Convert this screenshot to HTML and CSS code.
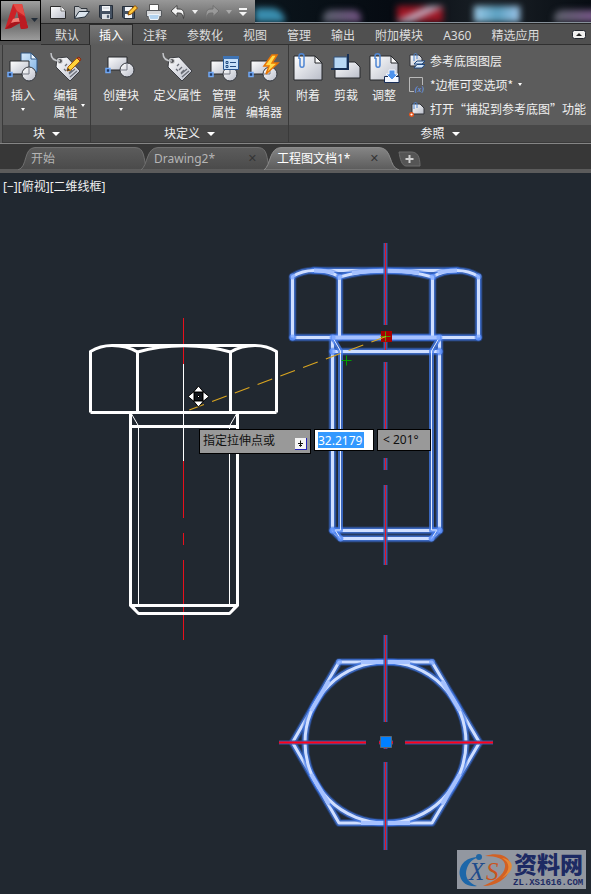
FILE: index.html
```html
<!DOCTYPE html>
<html lang="zh-CN">
<head>
<meta charset="utf-8">
<meta name="viewport" content="width=device-width, initial-scale=1">
<title>工程图文档1</title>
<link rel="stylesheet" href="styles.css">
</head>
<body>
<svg class="defs" aria-hidden="true">
  <defs>
    <linearGradient id="paper" x1="0" y1="0" x2="1" y2="1"><stop offset="0" stop-color="#ffffff"/><stop offset="1" stop-color="#b9bdc9"/></linearGradient>
    <linearGradient id="sky" x1="0" y1="0" x2="1" y2="1"><stop offset="0" stop-color="#d8ebfc"/><stop offset="1" stop-color="#82b4e6"/></linearGradient>
    <linearGradient id="tabFill" x1="0" y1="0" x2="0" y2="1"><stop offset="0" stop-color="#5c5c5c"/><stop offset="1" stop-color="#4a4a4a"/></linearGradient>
    <linearGradient id="tabActive" x1="0" y1="0" x2="0" y2="1"><stop offset="0" stop-color="#858585"/><stop offset="1" stop-color="#5b5b5b"/></linearGradient>
    <g id="block"><path d="M3 9H22V22H3Z" fill="url(#paper)" stroke="#26282c"/><path d="M1 20.500H5V24.500H1Z" fill="#203a66" stroke="#70a8f5" stroke-width="1.500"/><circle cx="22" cy="22" r="7" fill="url(#paper)" stroke="#33363c"/><path d="M22 15V22H15" fill="none" stroke="#777b85"/></g>
    <g id="tag"><path d="M7 6 17 5 30 19 20 29 6 15Z" fill="url(#paper)" stroke="#3b3d42"/><circle cx="10" cy="9" r="2.500" fill="#56585c" stroke="#d7d7d7"/><path d="M1 1C1 7 4 9 10 9" fill="none" stroke="#c3c5c9" stroke-width="1.500"/><path d="M17 12 15 14M20 15 17 18M22 18 19 21M14 17 16 19M19 22 25 17M20 25 27 19" stroke="#6b6f78" stroke-width="1.300"/></g>
    <g id="pencil"><path d="M17 19 18 15 27 6 30 9 21 18Z" fill="#ffd43a" stroke="#ad5b00"/><path d="M27 6 30 9 31 7 29 5Z" fill="#c85932" stroke="#833014"/><path d="M17 19 18 16 20 18Z" fill="#333"/></g>
    <g id="sheet"><path d="M2 4H23L30 11V28H2Z" fill="url(#paper)" stroke="#25272b"/><path d="M23 4V11H30Z" fill="#f7f7f7" stroke="#25272b"/></g>
    <path id="clip" d="M6 6V3C6 0 11 0 11 3V12C11 15 7 15 7 12V5" fill="none" stroke="#4f86d3" stroke-width="1.500"/>
    <path id="head-side" d="M90.500 412.500V351.500C97 347.500 104 345.500 112 345.500C122 345.500 130 347.500 137.500 352M276.500 412.500V351.500C270 347.500 263 345.500 255 345.500C246 345.500 238 347.500 230.500 352"/>
    <path id="head-mid" d="M137.500 412.500V352C166 343.500 202 343.500 230.500 352V412.500"/>
    <path id="head-top" d="M112 345.500H255"/>
    <path id="head-base" d="M90.500 412.500H276.500"/>
    <path id="shank" d="M130.500 412.500V605.500L138.500 613.500H229.500L237.500 605.500V412.500Z"/>
    <path id="rings" d="M130.500 426.500H237.500M130.500 605.500H237.500"/>
    <path id="thread" d="M131 413 138.500 426V605L133 605L138.500 613.500M237 413 229.500 426V605L235 605L229.500 613.500"/>
    <path id="bolt-axis" d="M183.500 318V400M183.500 412V425M183.500 437V518M183.500 533V545M183.500 560V640"/>
    <path id="hexagon" d="M339 662H432L479.500 742.500 432 823H339L292.500 742.500Z"/>
    <circle id="inscribed" cx="385.500" cy="742.500" r="80.500"/>
    <path id="plan-axis-v" d="M385.500 635V722M385.500 736V749M385.500 762V850"/>
    <path id="plan-axis-h" d="M279 742.500H366M379 742.500H393M405 742.500H493"/>
  </defs>
</svg>

<header class="top">
  <button class="app" aria-label="应用程序菜单">
    <svg width="39" height="39" viewBox="0 0 39 39"><path d="M4 28 12 3H21L27 27 20 28 16 10 10 27Z" fill="#cc2227"/><path d="M12 3H21L24 15 16 10Z" fill="#e34b45"/><path d="M4 28 14 18 25 20 27 27 20 28 19 22 10 27Z" fill="#a8151c"/><path d="M12 18C17 16 23 17 26 24C21 20 16 20 10 22Z" fill="#f08078"/><path d="M20 28 17 13 24 16 27 27Z" fill="#bb1b22"/><path d="M30 17H37L33.500 21Z" fill="#222c38"/></svg>
  </button>
  <div class="titlebar">
    <div class="quick">
      <button aria-label="新建"><svg width="16" height="16"><path d="M.5 2.500H11L15.500 7V14.500H.5Z" fill="url(#paper)" stroke="#2a2a2a"/><path d="M11 2.500V7H15.500" fill="#fff" stroke="#777"/></svg></button>
      <button aria-label="打开"><svg width="16" height="16"><path d="M.5 14V2.500H5L7 4.500H13V7" fill="#bfc3c8" stroke="#30353c"/><path d="M.5 14.500 5 7.500H15.500L11 13Z" fill="#dce5ee" stroke="#26313d"/></svg></button>
      <button aria-label="保存"><svg width="16" height="16"><path d="M1.500 1.500H14.500V14.500H3L1.500 13Z" fill="#445162" stroke="#252d38"/><path d="M4 2H12V7H4Z" fill="#f2f4f7"/><path d="M4 10H12V15H4Z" fill="#dce0e5"/><path d="M9 11H11V14H9ZM5 4H11" fill="#39465a" stroke="#97a1af" stroke-width=".5"/></svg></button>
      <button aria-label="另存为"><svg width="16" height="16"><path d="M.5 2.500H12.500V14.500H2L.5 13Z" fill="#445162" stroke="#252d38"/><path d="M3 3H10V7H3ZM3 10H10V14H3Z" fill="#f2f4f7"/><path d="M6 11 7 7.500 13 1.500 15.500 4 9.500 10Z" fill="#ffc738" stroke="#8e4b00"/></svg></button>
      <button aria-label="打印"><svg width="16" height="16"><path d="M3.500 7V.5H12.500V7" fill="#fff" stroke="#555"/><path d="M.5 6.500H15.500V12.500H.5Z" fill="#d5d7da" stroke="#55585c"/><path d="M2.500 10.500H13.500L12 15.500H4Z" fill="#b3d3ef" stroke="#eef3f8"/></svg></button>
      <button aria-label="放弃"><svg width="16" height="16"><path d="M1 7 7 1.500V5H9C13 5 15 8 13.500 14.500C13 11 12 9 9 9H7V12.500Z" fill="#f3f3f3" stroke="#444"/></svg></button>
      <button class="mini" aria-label="放弃列表"><svg width="6" height="4"><path d="M0 0H6L3 4Z" fill="#eee"/></svg></button>
      <button aria-label="重做"><svg width="16" height="16"><path d="M15 7 9 1.500V5H7C3 5 1 8 2.500 14.500C3 11 4 9 7 9H9V12.500Z" fill="#999" stroke="#707070"/></svg></button>
      <button class="mini" aria-label="重做列表"><svg width="6" height="4"><path d="M0 0H6L3 4Z" fill="#aaa"/></svg></button>
      <button class="more" aria-label="自定义"><svg width="8" height="8"><path d="M0 0H8V2H0ZM0 4H8L4 8Z" fill="#f5f5f5"/></svg></button>
    </div>
    <div class="glass"><i class="teal"></i><i class="plum"></i><i class="red"></i><i class="ice"></i><i class="violet"></i></div>
  </div>
  <nav class="menu">
    <a href="#">默认</a><a href="#" class="on">插入</a><a href="#">注释</a><a href="#">参数化</a><a href="#">视图</a><a href="#">管理</a><a href="#">输出</a><a href="#">附加模块</a><a href="#">A360</a><a href="#">精选应用</a>
    <button class="fold" aria-label="最小化功能区"><svg width="14" height="9"><rect x=".5" y=".5" width="13" height="8" rx="2" fill="#f0f0f0" stroke="#242830"/><path d="M4 6H10L7 3Z" fill="#222"/></svg></button>
  </nav>
</header>

<main>
<section class="ribbon" aria-label="功能区">
  <div class="panel">
    <div class="tools">
      <button class="tool w40"><svg width="32" height="32"><path d="M14 1H24L30 7V20H14Z" fill="url(#sky)" stroke="#315781"/><path d="M24 1V7H30Z" fill="#eff7ff" stroke="#315781"/><use href="#block"/></svg><span>插入</span><b class="caret"></b></button>
      <button class="tool w45 side"><svg width="32" height="32"><use href="#tag"/><use href="#pencil"/></svg><span>编辑<br>属性</span><b class="caret"></b></button>
    </div>
    <button class="caption">块<b class="arrow"></b></button>
  </div>
  <div class="panel blocks">
    <div class="tools">
      <button class="tool w60"><svg width="32" height="32"><use href="#block" y="-4"/></svg><span>创建块</span><b class="caret"></b></button>
      <button class="tool w53"><svg width="32" height="32"><use href="#tag"/></svg><span>定义属性</span></button>
      <button class="tool w40"><svg width="32" height="32"><use href="#block"/><path d="M15.500 4.500H30.500V17.500H15.500Z" fill="#c7e0f9" stroke="#28558f"/><path d="M15 4H31V7H15Z" fill="#3f74b5"/><path d="M18 9.500H20V11.500H18ZM18 13.500H20V15.500H18ZM22 10.500H28M22 14.500H28" fill="none" stroke="#234c82"/></svg><span>管理<br>属性</span></button>
      <button class="tool w40"><svg width="32" height="32"><use href="#block"/><path d="M24 3 16 14H21L18 22 30 11H24L29 3Z" fill="#ffda4a" stroke="#e87505" stroke-width="1.500"/></svg><span>块<br>编辑器</span></button>
    </div>
    <button class="caption">块定义<b class="arrow"></b></button>
  </div>
  <div class="panel wide">
    <div class="tools">
      <button class="tool w38"><svg width="32" height="32"><use href="#sheet"/><use href="#clip" x="1" y="1"/></svg><span>附着</span></button>
      <button class="tool w38"><svg width="32" height="32"><path d="M5 10H25L30 15V26H5Z" fill="url(#paper)" stroke="#25272b"/><path d="M4 5H17V17H4Z" fill="#b8d8f5" stroke="#33527c"/><path d="M18 2V17H1" fill="none" stroke="#152e54" stroke-width="2"/></svg><span>剪裁</span></button>
      <button class="tool w38"><svg width="32" height="32"><use href="#sheet"/><use href="#clip" x="1" y="1"/><path d="M16.500 24.500H31V30.500H16.500Z" fill="#f3f7ff" stroke="#182d56"/><path d="M21 18H27V22H30L24 28 18 22H21Z" fill="#4e93ee" stroke="#f3f7ff"/></svg><span>调整</span></button>
      <div class="rows">
        <button><svg width="16" height="16"><path d="M1 2H10L13 5V13H1Z" fill="url(#paper)" stroke="#303238"/><path d="M5 8V2C5 0 8 0 8 2V6" fill="none" stroke="#4f86d3"/><path d="M8 8H16L13 11H5ZM8 11.500H16L13 15H5Z" fill="#d5e8fb" stroke="#20477d"/></svg>参考底图图层</button>
        <button><svg width="16" height="16"><path d="M5 14.500H.5V.5H13.500V8" fill="none" stroke="#b9b9b9"/><text x="6" y="15" class="fx">(x)</text></svg>*边框可变选项*<b class="caret"></b></button>
        <button><svg width="16" height="16"><path d="M3 3H11L15 7V13H3Z" fill="url(#paper)" stroke="#303238"/><path d="M5 8V3C5 1 8 1 8 3V7" fill="none" stroke="#4f86d3"/><circle cx="2.500" cy="13.500" r="1.800" fill="#fff" stroke="#e5531b" stroke-width="1.400"/></svg>打开“捕捉到参考底图”功能</button>
      </div>
    </div>
    <button class="caption">参照<b class="arrow"></b></button>
  </div>
</section>

<nav class="files">
  <a href="#" class="file"><svg viewBox="0 0 129 23" preserveAspectRatio="none"><path d="M0 23C10 20 5 1 17 .5H117C127 1 125 10 129 23Z" fill="url(#tabFill)" stroke="#707070"/></svg><span>开始</span></a>
  <a href="#" class="file"><svg viewBox="0 0 129 23" preserveAspectRatio="none"><path d="M0 23C7 18 5 1 17 .5H117C127 1 125 10 129 23Z" fill="url(#tabFill)" stroke="#707070"/></svg><span>Drawing2*</span><i>✕</i></a>
  <a href="#" class="file current"><svg viewBox="0 0 135 23" preserveAspectRatio="none"><path d="M0 23C7 18 5 1 17 .5H115C129 1 124 20 135 23Z" fill="url(#tabActive)" stroke="#8c8c8c"/></svg><span>工程图文档1*</span><i>✕</i></a>
  <button class="add" aria-label="新图形"><svg width="23" height="16"><path d="M1 1H13C19 1 22 5 22 15H8C4 15 2 8 1 1Z" fill="#555" stroke="#6c6c6c"/><path d="M11.500 4V12M7.500 8H15.500" stroke="#d0d0d0" stroke-width="2"/></svg></button>
</nav>

<section class="canvas" aria-label="绘图区">
  <svg class="drawing" width="591" height="721" viewBox="0 173 591 721">
    <g class="white">
      <use href="#bolt-axis" class="axis"/>
      <use href="#head-side"/><use href="#head-mid"/><use href="#head-top"/><use href="#head-base"/><use href="#shank"/><use href="#rings"/>
      <use href="#thread" class="thin"/>
    </g>
    <g class="picked" transform="translate(202 -75)">
      <g><use href="#shank" class="halo"/><use href="#shank" class="glow"/><use href="#shank" class="core"/></g>
      <g><use href="#rings" class="halo"/><use href="#rings" class="glow"/><use href="#rings" class="core"/></g>
      <g><use href="#head-base" class="halo"/><use href="#head-base" class="glow"/><use href="#head-base" class="core"/></g>
      <g><use href="#head-top" class="halo"/><use href="#head-top" class="glow"/><use href="#head-top" class="core"/></g>
      <g><use href="#head-side" class="halo"/><use href="#head-side" class="glow"/><use href="#head-side" class="core"/></g>
      <g><use href="#head-mid" class="halo"/><use href="#head-mid" class="glow"/><use href="#head-mid" class="core"/></g>
      <g><use href="#thread" class="halo slim"/><use href="#thread" class="glow slim"/><use href="#thread" class="core slim"/></g>
      <path class="overlap" d="M130 412.500H238M112 345.500C122 345.500 127 346 132 348M255 345.500C246 345.500 241 346 236 348M150 348C170 345 197 345 217 348"/>
      <g class="nodes"><circle cx="90.500" cy="351.500" r="3"/><circle cx="276.500" cy="351.500" r="3"/><circle cx="137.500" cy="352" r="3"/><circle cx="230.500" cy="352" r="3"/><circle cx="90.500" cy="412.500" r="3"/><circle cx="276.500" cy="412.500" r="3"/><circle cx="130.500" cy="412.500" r="3"/><circle cx="237.500" cy="412.500" r="3"/><circle cx="130.500" cy="426.500" r="3"/><circle cx="237.500" cy="426.500" r="3"/><circle cx="130.500" cy="605.500" r="3"/><circle cx="237.500" cy="605.500" r="3"/><circle cx="138.500" cy="613.500" r="3"/><circle cx="229.500" cy="613.500" r="3"/></g>
      <use href="#bolt-axis" class="axishalo"/><use href="#bolt-axis" class="axisglow"/><use href="#bolt-axis" class="axis"/>
    </g>
    <g class="picked">
      <g><use href="#hexagon" class="halo"/><use href="#hexagon" class="glow"/><use href="#hexagon" class="core"/></g>
      <g><use href="#inscribed" class="halo"/><use href="#inscribed" class="glow"/><use href="#inscribed" class="core"/></g>
      <path class="overlap" d="M361 662H410M361 823H410M311 711 329 681M442 681 460 711M311 774 329 804M442 804 460 774"/>
      <g class="nodes"><circle cx="339" cy="662" r="3"/><circle cx="432" cy="662" r="3"/></g>
      <use href="#plan-axis-v" class="axishalo"/><use href="#plan-axis-v" class="axisglow"/><use href="#plan-axis-v" class="axis"/>
      <use href="#plan-axis-h" class="axishalo"/><use href="#plan-axis-h" class="axisglow"/><use href="#plan-axis-h" class="axis bright"/>
    </g>
    <path d="M380.500 736.500H391.500V747.500H380.500Z" fill="#0080ff" stroke="#5d6874"/>
    <path d="M381 331H392V342H381Z" fill="#a80000"/>
    <path d="M380.500 336.500H390.500M385.500 331.500V341.500" stroke="#4a9a00"/>
    <path d="M341.500 360.500H351.500M346.500 355.500V365.500" stroke="#00a000"/>
    <path d="M386 336.500 184 412" stroke="#d9a520" stroke-width="1.200" stroke-dasharray="15.600 8.700"/>
    <path d="M183.500 364V461" stroke="#fff"/>
    <g fill="#fff" stroke="#000"><path d="M198.500 386 203.500 392H193.500ZM198.500 407 203.500 401H193.500ZM188 396.500 194 391.500V401.500ZM209 396.500 203 391.500V401.500Z"/><path d="M194.500 392.500H202.500V400.500H194.500Z" fill="#10141a"/><path d="M197.500 395.500H199.500V397.500H197.500Z"/></g>
  </svg>
  <p class="view">[−][俯视][二维线框]</p>
  <form class="dynamic">
    <label class="prompt" for="dist">指定拉伸点或 <svg width="12" height="12"><path d="M0 0H12V12H0Z" fill="#2424b8"/><path d="M0 0H11V11H0Z" fill="#f4f4f4"/><path d="M5.500 2.500V8M3 5.500H8M4 7 5.500 8.500 7 7" fill="none" stroke="#111"/></svg></label>
    <input id="dist" type="text" value="32.2179">
    <output>&lt; 201°</output>
  </form>
  <svg class="mark" width="129" height="39" viewBox="0 0 129 39">
    <path d="M0 0H129V39H0Z" fill="#9297a0"/>
    <path d="M22 7C7 7 1 17 3 26C5 34 12 37 20 36C11 33 7 26 10 18C12 12 16 9 22 7Z" fill="#1d67a9"/>
    <path d="M28 6C44 1 56 8 53 19C50 29 39 36 26 36C38 31 47 25 48 17C49 9 40 6 28 6Z" fill="#d26124"/>
    <path d="M45 8C54 13 53 21 45 28C58 21 58 10 45 8Z" fill="#e88835"/>
    <circle cx="22" cy="7" r="3" fill="#1f66a4"/>
    <text x="12" y="30" class="mx">X</text><text x="29" y="30" class="ms">S</text>
    <text x="57" y="23" class="mcn">资料网</text>
    <text x="56" y="35" class="murl">ZL.XS1616.COM</text>
  </svg>
</section>
</main>
</body>
</html>
```
FILE: styles.css
```css
* { box-sizing: border-box; }
html, body { height: 100%; }
body {
  margin: 0;
  display: flex;
  flex-direction: column;
  overflow: hidden;
  background: #212830;
  color: #f0f0f0;
  font: 12px/17px "Noto Sans", "Noto Sans CJK SC", sans-serif;
}
button {
  margin: 0; padding: 0; border: 0;
  background: none; color: inherit;
  font: inherit;
}
a { color: inherit; text-decoration: none; }
svg { display: block; flex: none; }
.defs { position: absolute; width: 0; height: 0; }

/* Title bar and menu */
.top {
  display: grid;
  grid-template-columns: 41px minmax(0, 1fr);
  grid-template-rows: 24px 21px;
  background: #505050;
}
.app {
  grid-row: 1 / 3;
  height: 41px;
  border: 1px solid #000;
  background: linear-gradient(#a0a0a0, #616161 50%, #9c9c9c);
}
.titlebar { display: flex; min-width: 0; border-bottom: 1px solid #262626; }
.quick {
  display: flex;
  flex: none;
  align-items: center;
  gap: 8px;
  width: 214px;
  padding-left: 9px;
  background: linear-gradient(#989898, #606060);
}
.quick .mini { margin: 0 -2px; }
.quick .more { margin-left: 1px; }
.glass {
  flex: 1;
  min-width: 0;
  display: flex;
  align-items: flex-end;
  overflow: hidden;
  border-bottom: 1px solid #87919a;
  background: linear-gradient(90deg, #0b151c, #060b12 40%, #1a2026 70%, #080d13);
}
.glass i { height: 16px; filter: blur(3px); flex: none; }
.glass .teal { width: 30px; height: 14px; margin-right: 38px; border-radius: 0 15px 0 0; background: #398dae; }
.glass .plum { width: 38px; height: 12px; margin-right: 36px; border-radius: 8px 8px 0 0; background: linear-gradient(90deg, #59606b, #705080); }
.red { width: 46px; margin-right: 31px; background: linear-gradient(155deg, #9c1523 35%, #c5bdd0 45%, #b8a5b8 55%, #9c1523 65%); }
.ice { width: 46px; margin-right: 34px; background: linear-gradient(90deg, #9dcbe8, #5a9fbf 50%, #9dc4e8); }
.glass .violet { width: 44px; height: 12px; border-radius: 8px 0 0; background: linear-gradient(90deg, #5b6069, #785489); }
.menu {
  display: flex;
  padding-left: 4px;
  border-bottom: 1px solid #303030;
  color: #dcdcdc;
}
.menu a { padding: 3px 10px 0; white-space: nowrap; }
.menu .on {
  height: 21px;
  padding: 2px 9px 0;
  border: 1px solid #2a2a2a;
  border-bottom: 0;
  background: linear-gradient(#777, #5c5c5c);
  color: #fff;
}
.fold { margin: 6px 5px auto auto; }

/* Ribbon */
.ribbon {
  display: flex;
  height: 99px;
  padding-left: 2px;
  border-bottom: 1px solid #858585;
  background: #5c5c5c;
}
.panel {
  display: flex;
  flex-direction: column;
  flex: none;
  border-left: 1px solid #3a3a3a;
  border-bottom: 1px solid #3a3a3a;
}
.wide { flex: 1; min-width: 0; }
.tools { display: flex; flex: 1; padding: 7px 2px 0 0; }
.blocks .tools { padding-right: 4px; }
.tool {
  display: flex;
  flex-direction: column;
  align-items: center;
  white-space: nowrap;
}
.tool span { margin-top: 3px; }
.w38 { width: 38px; }
.w40 { width: 40px; }
.w45 { width: 45px; }
.w53 { width: 53px; }
.w60 { width: 60px; }
.caret { border: 2px solid transparent; border-top: 3px solid #fff; border-bottom: 0; }
.tool .caret { margin-top: 4px; }
.side { position: relative; }
.side .caret { position: absolute; right: 3px; top: 48px; }
.caption {
  display: flex;
  align-items: center;
  justify-content: center;
  gap: 7px;
  height: 17px;
  background: #484848;
}
.arrow { border: 4px solid transparent; border-top-color: #fff; border-bottom: 0; }
.rows { display: flex; flex-direction: column; gap: 7px; margin-left: 6px; }
.rows button {
  display: flex;
  align-items: center;
  gap: 5px;
  height: 17px;
  white-space: nowrap;
  font-family: "Noto Sans CJK SC", sans-serif;
}
.fx { font: italic 8px "Liberation Serif", serif; fill: #6aa5ff; }

/* Drawing tabs */
.files {
  display: flex;
  height: 29px;
  padding: 3px 0 0 18px;
  border-bottom: 4px solid #5b5b5b;
  background: #373737;
}
.file {
  position: relative;
  display: flex;
  align-items: center;
  justify-content: space-between;
  width: 129px;
  height: 23px;
  margin-right: -6px;
  padding: 0 13px;
  color: #b5b5b5;
  white-space: nowrap;
}
.file svg { position: absolute; inset: 0; width: 100%; height: 23px; }
.file span, .file i { position: relative; }
.file i { font: bold 11px "DejaVu Sans", sans-serif; color: #343434; }
.current { width: 135px; padding-right: 20px; color: #fff; }
.add { margin: 4px 0 auto 5px; }

/* Drawing area */
main { flex: 1; display: flex; flex-direction: column; min-height: 0; }
.ribbon, .files { flex: none; }
.canvas { position: relative; flex: 1; overflow: hidden; background: #212830; }
.view { position: absolute; left: 3px; top: 5px; margin: 0; }
.white, .picked { fill: none; stroke: #fff; stroke-width: 3px; stroke-linejoin: round; }
.thin { stroke-width: 1px; }
.axis { stroke: #e8101c; stroke-width: 1px; }
.bright { stroke: #ff0018; stroke-width: 2px; }
.halo { stroke: #2f62cc; stroke-opacity: .35; stroke-width: 8px; stroke-linecap: round; }
.glow { stroke: #4a82f5; stroke-opacity: .6; stroke-width: 6px; stroke-linecap: round; }
.core { stroke: #cfdeff; }
.slim { stroke-width: 5px; }
.core.slim { stroke-width: 1px; stroke: #e4edff; }
.axishalo { stroke: #2f55a8; stroke-opacity: .5; stroke-width: 5px; }
.axisglow { stroke: #4a5cb0; stroke-opacity: .8; stroke-width: 3px; }
.overlap { stroke: #a5c1ff; stroke-width: 4px; }
.nodes { fill: #6a9bff; fill-opacity: .6; stroke: none; }

/* Dynamic input */
.dynamic {
  position: absolute;
  left: 199px; top: 256px;
  display: flex;
  align-items: flex-start;
  gap: 3px;
  color: #111;
}
.prompt, .dynamic output { border: 1px solid #000; background: #999; white-space: nowrap; }
.prompt {
  display: flex;
  justify-content: space-between;
  width: 112px;
  height: 25px;
  padding: 2px 3px;
}
.prompt svg { margin-top: 6px; }
.dynamic input {
  width: 60px;
  height: 22px;
  padding: 2px 9px 2px 3px;
  border: 1px solid #000;
  background: linear-gradient(#39f, #39f) content-box, #fff;
  color: #fff;
  font: inherit;
}
.dynamic output { width: 54px; height: 22px; padding: 1px 5px; }

/* Watermark */
.mark { position: absolute; right: 5px; bottom: 5px; }
.mx, .ms { font: italic 25px "Liberation Serif", serif; }
.mx { fill: #1e4c8c; }
.ms { fill: #c9541e; }
.mcn { font: 900 23px "Noto Sans CJK SC", sans-serif; fill: #1d2a63; }
.murl { font: bold 9px "Liberation Mono", monospace; fill: #1d2a63; }
```
